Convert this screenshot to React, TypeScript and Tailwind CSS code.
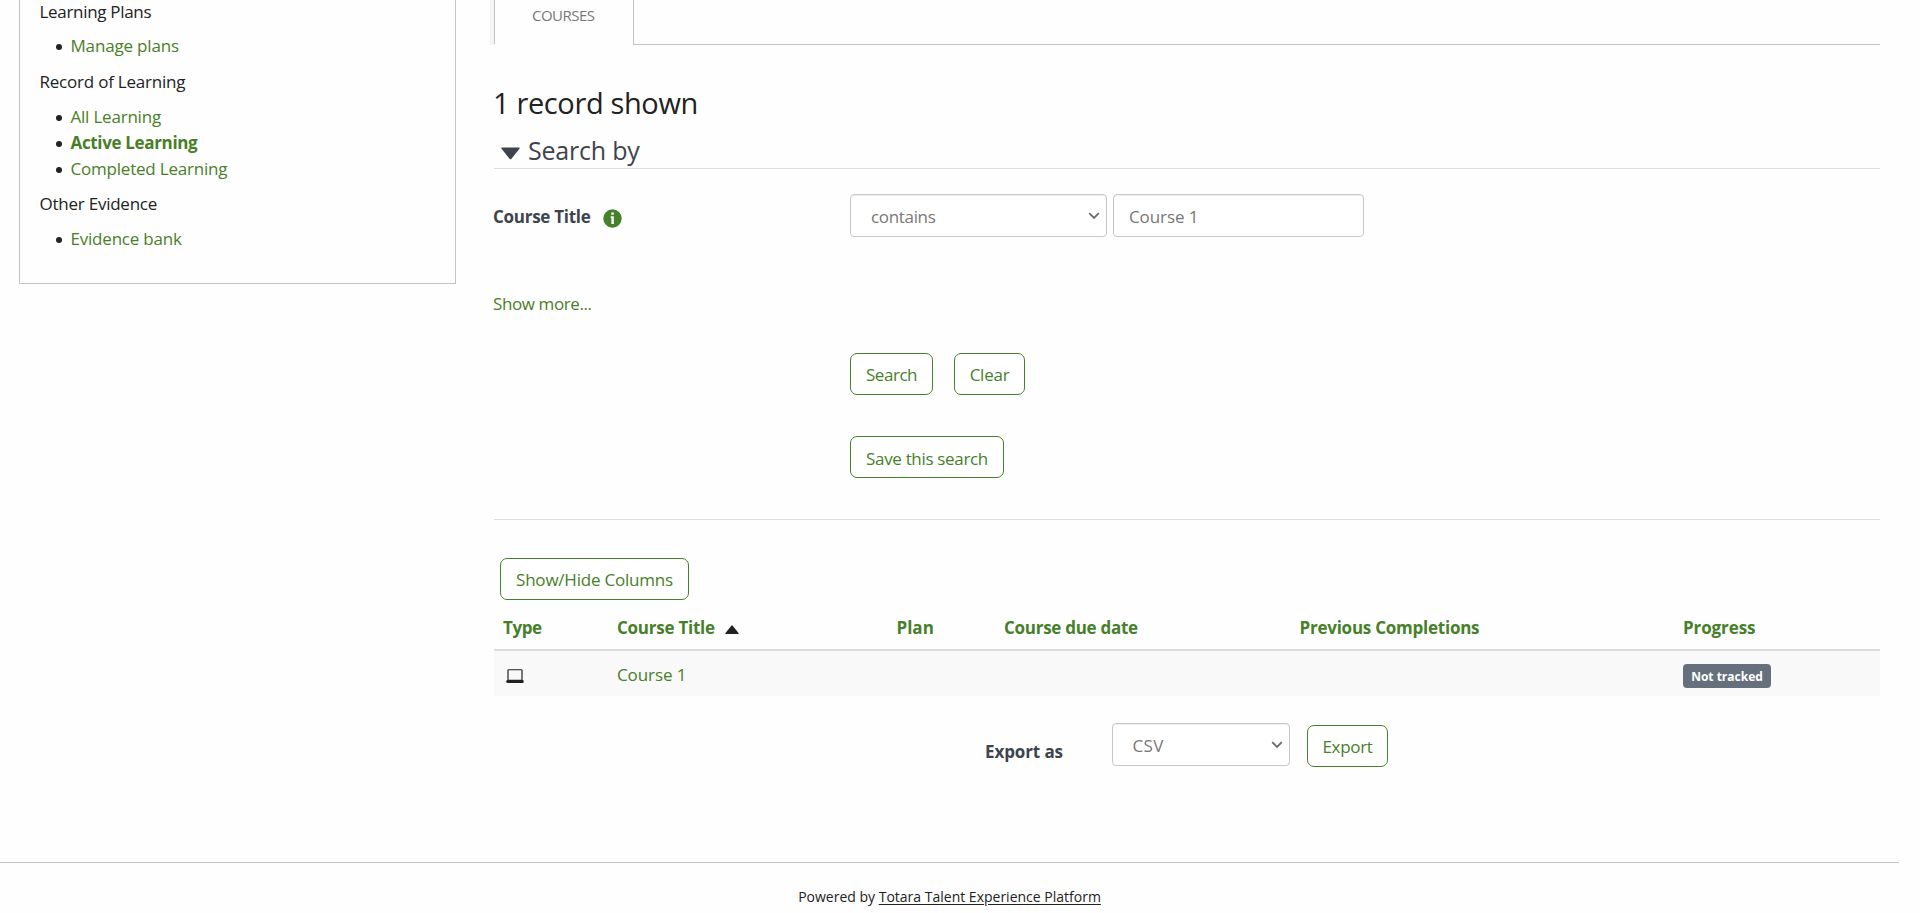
import type { ReactNode } from "react";

function SideLink({ children, className }: { children: ReactNode; className: string }) {
  return (
    <li className="flex h-[26px] items-center pl-[16px]">
      <span className="mt-[2px] mr-[9px] size-[6px] shrink-0 rounded-full bg-[#222]" />
      <a className={`whitespace-nowrap leading-[26px] text-[#4a7e28] ${className}`}>{children}</a>
    </li>
  );
}

function Button({ children, className }: { children: ReactNode; className: string }) {
  return (
    <button
      className={`flex h-[42px] items-center justify-center whitespace-nowrap rounded-[7px] border border-[#47802a] bg-white text-[#47802a] ${className}`}
    >
      {children}
    </button>
  );
}

function Chevron() {
  return (
    <svg width="12" height="8" viewBox="0 0 12 8" fill="none" stroke="#6b6b6b" strokeWidth="1.8">
      <path d="M1.2 1.2 L6 6 L10.8 1.2" />
    </svg>
  );
}

function Field({ children, className }: { children: ReactNode; className: string }) {
  return (
    <div
      className={`flex h-[43px] items-center whitespace-nowrap rounded-[4px] border border-[#c8c8c8] bg-white text-[#777] shadow-[inset_0_1px_1px_rgba(0,0,0,0.075)] ${className}`}
    >
      {children}
    </div>
  );
}

export default function App() {
  return (
    <div className="flex h-[913px] w-[1920px] flex-col overflow-hidden bg-[#fefefe] font-['Open_Sans','Noto_Sans',sans-serif] text-[17px] text-[#222]">
      <div className="flex h-[862px] shrink-0 items-start">
        <aside className="ml-[19px] h-[284px] w-[437px] shrink-0 border border-t-0 border-[#c4c4c4] pl-[19.5px]">
          <p className="h-6 leading-6 tracking-[-0.31px]">Learning Plans</p>
          <ul className="mt-[9px]">
            <SideLink className="tracking-[-0.17px]">Manage plans</SideLink>
          </ul>
          <p className="mt-[10px] h-[26px] leading-[26px] tracking-[-0.22px]">Record of Learning</p>
          <ul className="mt-[9px]">
            <SideLink className="tracking-[-0.21px]">All Learning</SideLink>
            <SideLink className="font-bold tracking-[-0.34px]">Active Learning</SideLink>
            <SideLink className="tracking-[-0.21px]">Completed Learning</SideLink>
          </ul>
          <p className="mt-[9px] h-[26px] leading-[26px] tracking-[-0.24px]">Other Evidence</p>
          <ul className="mt-[9px]">
            <SideLink className="tracking-[-0.21px]">Evidence bank</SideLink>
          </ul>
        </aside>

        <main className="ml-[34px] w-[1390px] shrink-0">
          <div className="flex h-[45px]">
            <div className="w-1 bg-[#f5f5f5]" />
            <div className="h-[44px] w-[140px] border-x border-[#c4c4c4] pl-[37px] text-[15px] leading-[30px] tracking-[-0.53px] text-[#777]">
              COURSES
            </div>
            <div className="-ml-px flex-1 border-b border-[#c4c4c4]" />
          </div>

          <div className="pl-1">
            <h2 className="-ml-px mt-[38px] h-[40px] text-[29px] leading-[40px] tracking-[-0.36px]">1 record shown</h2>

            <h3 className="mt-[9px] flex h-[37px] items-center border-b border-[#ddd] pl-[7px] text-[25px] leading-[36px] tracking-[-0.2px] text-[#3d444e]">
              <svg width="19" height="13" viewBox="0 0 19 13" className="mt-[6px] mr-[8px]">
                <path d="M0.9 0.4 H18.1 Q19.2 0.6 18.6 1.6 L10.5 11.7 Q9.5 12.8 8.5 11.7 L0.4 1.6 Q-0.2 0.6 0.9 0.4 Z" fill="#3d444e" />
              </svg>
              <span>Search by</span>
            </h3>

            <div className="mt-[25px] flex h-[43px] items-center">
              <div className="flex w-[356px] items-center">
                <span className="-ml-px pt-[2px] font-bold tracking-[-0.27px] text-[#3d444e]">Course Title</span>
                <svg width="19" height="19" viewBox="0 0 19 19" className="mt-[5px] ml-[12.5px]">
                  <circle cx="9.5" cy="9.5" r="9.2" fill="#47802a" />
                  <path d="M8.3 3.6 H10.8 V5.8 H8.3 Z M7.7 7.3 H10.8 V15 H8.4 V8.9 H7.7 Z" fill="#fff" />
                </svg>
              </div>
              <Field className="w-[257px] justify-between pr-[6px] pl-[20px]">
                <span className="pt-[2px] tracking-[-0.33px]">contains</span>
                <Chevron />
              </Field>
              <Field className="ml-[6px] w-[251px] pl-[15px]">
                <span className="pt-[2px] tracking-[-0.1px]">Course 1</span>
              </Field>
            </div>

            <p className="-ml-px mt-[54px] h-[26px] leading-[26px] tracking-[-0.4px] text-[#4a7e28]">Show more...</p>

            <div className="mt-[36px] ml-[356px] flex gap-[21px]">
              <Button className="w-[83px] pt-[2px] tracking-[-0.45px]">Search</Button>
              <Button className="w-[71px] pt-[2px] tracking-[-0.25px]">Clear</Button>
            </div>
            <div className="mt-[41px] ml-[356px] flex">
              <Button className="w-[154px] pt-[3px] tracking-[-0.33px]">Save this search</Button>
            </div>

            <div className="mt-[41px] h-px bg-[#ddd]" />

            <div className="mt-[38px] ml-[6px] flex">
              <Button className="w-[189px] pt-[2px] tracking-[-0.21px]">Show/Hide Columns</Button>
            </div>

            <table className="w-[1386px] table-fixed border-collapse text-left text-[#47802a]">
              <colgroup>
                <col className="w-[113px]" />
                <col className="w-[279px]" />
                <col className="w-[108px]" />
                <col className="w-[295px]" />
                <col className="w-[384px]" />
                <col className="w-[207px]" />
              </colgroup>
              <thead>
                <tr className="h-[51px] whitespace-nowrap bg-[linear-gradient(#ddd,#ddd)] bg-[length:100%_2px] bg-bottom bg-no-repeat align-top leading-[26px]">
                  <th className="px-[9px] pt-[15px] tracking-[-0.42px]">Type</th>
                  <th className="px-[10px] pt-[15px] tracking-[-0.25px]">
                    <div className="flex items-center">
                      Course Title
                      <svg width="14" height="9" viewBox="0 0 14 9" className="mt-[3px] ml-[10px]">
                        <path d="M0.8 9 H13.2 Q14.2 8.9 13.5 7.9 L7.7 0.7 Q7 0 6.3 0.7 L0.5 7.9 Q-0.2 8.9 0.8 9 Z" fill="#222" />
                      </svg>
                    </div>
                  </th>
                  <th className="px-[10.5px] pt-[15px]">Plan</th>
                  <th className="px-[10px] pt-[15px] tracking-[-0.28px]">Course due date</th>
                  <th className="px-[10.5px] pt-[15px] tracking-[-0.24px]">Previous Completions</th>
                  <th className="px-[10px] pt-[15px] tracking-[-0.11px]">Progress</th>
                </tr>
              </thead>
              <tbody>
                <tr className="h-[45px] bg-[#f9f9f9] align-top">
                  <td className="pt-[18px] pl-[12px]">
                    <svg width="18" height="14" viewBox="0 0 18 14" className="block">
                      <rect x="2" y="0.75" width="14" height="10.6" rx="0.8" fill="none" stroke="#222" strokeWidth="1.2" />
                      <rect x="0.3" y="11" width="17.4" height="3" rx="1.2" fill="#222" />
                    </svg>
                  </td>
                  <td className="px-[10px] pt-[11px] leading-[26px] tracking-[-0.1px]">Course 1</td>
                  <td />
                  <td />
                  <td />
                  <td className="pt-[13px] pl-[10px]">
                    <span className="flex h-6 w-[88px] items-center justify-center rounded-[4px] bg-[#65707c] pt-px text-[12px] font-bold text-white">
                      Not tracked
                    </span>
                  </td>
                </tr>
              </tbody>
            </table>

            <div className="mt-[27px] ml-[491px] flex items-start">
              <span className="mt-[16px] w-[127px] leading-[26px] font-bold tracking-[-0.11px] text-[#3d444e]">Export as</span>
              <Field className="w-[178px] justify-between pr-[6px] pl-[19.5px]">
                <span className="pt-[2px] tracking-[0.3px]">CSV</span>
                <Chevron />
              </Field>
              <Button className="mt-[2px] ml-[17px] w-[81px] pt-[2px] tracking-[-0.33px]">Export</Button>
            </div>
          </div>
        </main>
      </div>

      <footer className="w-[1899px] border-t border-[#c4c4c4] pt-[21px] text-center text-[14px] leading-[26px]">
        <span>Powered by </span>
        <a className="underline underline-offset-[2px]">Totara Talent Experience Platform</a>
      </footer>
    </div>
  );
}
